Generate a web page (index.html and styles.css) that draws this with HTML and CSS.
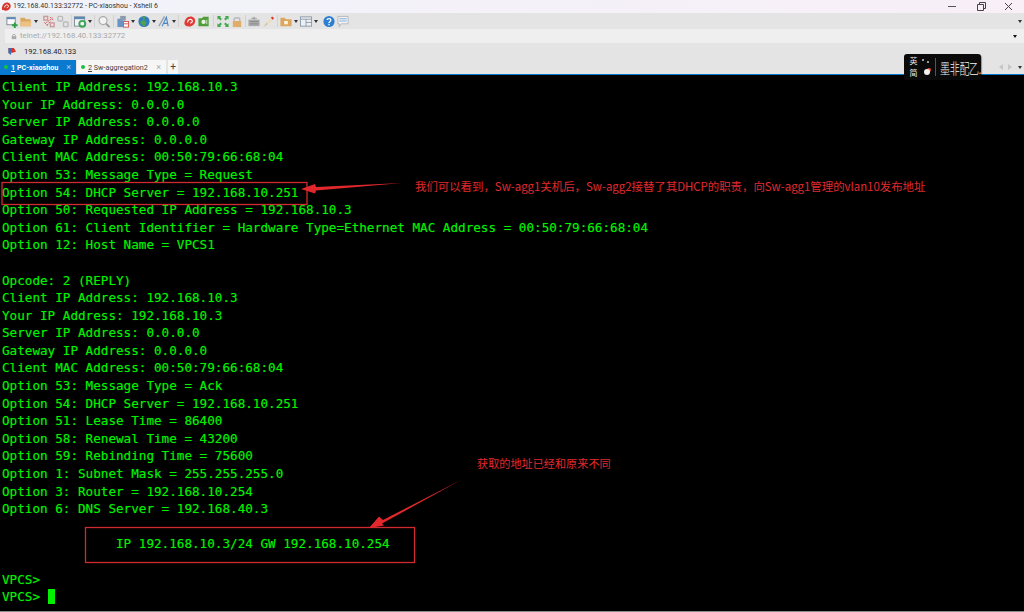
FILE: index.html
```html
<!DOCTYPE html>
<html lang="zh-CN">
<head>
<meta charset="utf-8">
<title>Xshell 6</title>
<link rel="stylesheet" href="styles.css">
</head>
<body>
<div class="app">
  <header class="titlebar">
    <svg class="appicon" viewBox="0 0 12 12"><path d="M1 9C1 5 3 1.500 6.500 1.500C9.500 1.500 11 4 10.500 6.500C10 9 7.500 10.500 5 10.500C3 10.500 1.500 10.500 1 9Z" fill="#d9342b"/><path d="M4 7C3.800 4.800 6 3.500 7.500 4.500C8.800 5.500 8 7.500 6.300 7.300" fill="none" stroke="#fff" stroke-width="1"/></svg>
    <span class="title">192.168.40.133:32772 - PC-xiaoshou - Xshell 6</span>
    <div class="winctl">
      <svg class="wc" viewBox="0 0 28 13"><path d="M9 6.500H17" stroke="#555" fill="none"/></svg>
      <svg class="wc" viewBox="0 0 28 13"><path d="M10.500 4.500H16.500V10.500H10.500ZM12.500 4.500V2.500H18.500V8.500H16.500" stroke="#444" fill="none"/></svg>
      <svg class="wc" viewBox="0 0 28 13"><path d="M10 3L17 10M17 3L10 10" stroke="#444" fill="none"/></svg>
    </div>
  </header>

  <nav class="toolbar">
    <svg class="tool" viewBox="0 0 14 14"><rect x="1.500" y="2.500" width="9" height="8" fill="#fafafa" stroke="#7a8a9a"/><rect x="1.500" y="2.500" width="9" height="2" fill="#5b88b5"/><path d="M10 8V14M7 11H13" stroke="#2ea043" stroke-width="2"/></svg>
    <svg class="tool" viewBox="0 0 14 14"><path d="M1 3H5.500L7 4.500H12V12H1Z" fill="#dca65f"/><path d="M2 7H13L12 12H1Z" fill="#eec184"/></svg>
    <i class="caret"></i>
    <svg class="tool g4" viewBox="0 0 14 14"><g fill="none" stroke="#c99" stroke-width="1.500"><rect x="1.500" y="1.500" width="4" height="4"/><rect x="8.500" y="8.500" width="4" height="4"/></g><path d="M3 9L11 3M5 11L9 6M8 2L12 6M2 8L6 12" stroke="#d9534f" stroke-dasharray="2 1" fill="none"/></svg>
    <svg class="tool" viewBox="0 0 14 14"><g fill="none" stroke="#bbb" stroke-width="1.500"><rect x="1.500" y="1.500" width="5" height="5" rx="1"/><rect x="7.500" y="7.500" width="5" height="5" rx="1"/></g></svg>
    <i class="sep"></i>
    <svg class="tool" viewBox="0 0 14 14"><rect x="1" y="2" width="11" height="10" fill="#f2f2f2" stroke="#7d8b99"/><rect x="1" y="2" width="11" height="2.500" fill="#5b88b5"/><circle cx="9.500" cy="9.500" r="3.200" fill="none" stroke="#3aa655" stroke-width="2"/></svg>
    <i class="caret"></i>
    <i class="sep wide"></i>
    <svg class="tool" viewBox="0 0 14 14"><circle cx="6" cy="6" r="4.300" fill="#f3f3f3" stroke="#aaa" stroke-width="1.300"/><path d="M9.200 9.200L13 13" stroke="#999" stroke-width="2"/></svg>
    <i class="sep wide"></i>
    <svg class="tool" viewBox="0 0 14 14"><rect x="1" y="4" width="6" height="9" fill="#6a94c4"/><rect x="4" y="1" width="6" height="5" fill="#8a9bb0"/><rect x="7.500" y="7" width="5.500" height="6" fill="#fff" stroke="#d9534f"/><path d="M8 9.500H12.500" stroke="#d9534f"/></svg>
    <i class="caret"></i>
    <svg class="tool g2" viewBox="0 0 14 14"><circle cx="7" cy="7" r="6" fill="#2f7cc0"/><path d="M4 2.500C6 3 7 4 6 5.500C5 7 3 6.500 3 8.500C3.500 10.500 6 10 6.500 12L8 12C8 10 10 10 9.500 8C9 6.500 7 7 7.500 5C8 3.500 9 3 8 1.500Z" fill="#4fa14c"/></svg>
    <i class="caret"></i>
    <svg class="tool g1" viewBox="0 0 14 14"><path d="M1.500 12L7.500 1.500" stroke="#9aa5b1" stroke-width="1.500"/><path d="M5 12L9.500 2.500L11.500 12M7 9H11" stroke="#4a86c5" stroke-width="1.200" fill="none"/></svg>
    <i class="caret"></i>
    <i class="sep wide"></i>
    <svg class="tool g2" viewBox="0 0 14 14"><path d="M1 9.500C1 5 3.500 1.500 7.500 1.500C11 1.500 13 4 12.500 7C12 10.500 9 12.500 6 12.500C3 12.500 1.500 11.500 1 9.500Z" fill="#e23b35"/><path d="M4.500 8C4.300 5.500 7 4 8.800 5.200C10.300 6.400 9.300 8.800 7.300 8.500" fill="none" stroke="#fff" stroke-width="1.200"/></svg>
    <svg class="tool" viewBox="0 0 14 14"><path d="M1 3.500H5L6 2H12V12H1Z" fill="#4f9d3a"/><circle cx="6.500" cy="7.500" r="2.300" fill="#e8f4dd"/><path d="M10 5V10" stroke="#d5ecc5"/></svg>
    <i class="sep wide"></i>
    <svg class="tool" viewBox="0 0 14 14"><g fill="#3ea84b"><path d="M1 1H5L3.800 2.200L5.800 4.200L4.200 5.800L2.200 3.800L1 5Z"/><path d="M13 1V5L11.800 3.800L9.800 5.800L8.200 4.200L10.200 2.200L9 1Z"/><path d="M1 13V9L2.200 10.200L4.200 8.200L5.800 9.800L3.800 11.800L5 13Z"/><path d="M13 13H9L10.200 11.800L8.200 9.800L9.800 8.200L11.800 10.200L13 9Z"/></g></svg>
    <svg class="tool" viewBox="0 0 14 14"><path d="M4 7V4.500C4 2.500 10 2.500 10 4.500V7" fill="none" stroke="#b8b8b8" stroke-width="1.500"/><rect x="2.500" y="6.500" width="9" height="6.500" fill="#dfae6b"/></svg>
    <i class="sep"></i>
    <svg class="tool" viewBox="0 0 14 14"><rect x="1" y="5" width="12" height="7" fill="#a9a9a9"/><path d="M7 5V2M2.500 7H11.500M2.500 9.500H11.500" stroke="#8a8a8a"/><path d="M4 3.500H10" stroke="#999"/></svg>
    <svg class="tool g1" viewBox="0 0 14 14"><path d="M2 12L4 8L9 3L11 5L6 10Z" fill="#ecdcc0"/><path d="M9 3L10.500 1.500L12.500 3.500L11 5Z" fill="#d9342b"/><path d="M1 13L4 8L6 10Z" fill="#d8c8a8"/></svg>
    <i class="sep"></i>
    <svg class="tool" viewBox="0 0 14 14"><path d="M1 3H5.500L7 4.500H13V12H1Z" fill="#dca65f"/><rect x="5" y="6.500" width="4" height="3.500" fill="#fff3dd"/></svg>
    <i class="caret"></i>
    <svg class="tool g1" viewBox="0 0 14 14"><rect x="1" y="2" width="12" height="10" fill="#eef1f4" stroke="#8b9aa8"/><path d="M1 4.500H13M7 4.500V12M7 8H13" stroke="#8b9aa8"/></svg>
    <i class="caret"></i>
    <svg class="tool g4" viewBox="0 0 14 14"><circle cx="7" cy="7" r="6" fill="#2f7fd0"/><path d="M5 5.500C5 3.500 9 3.500 9 5.500C9 7 7 7 7 8.500" fill="none" stroke="#fff" stroke-width="1.400"/><rect x="6.300" y="9.500" width="1.400" height="1.500" fill="#fff"/></svg>
    <svg class="tool" viewBox="0 0 14 14"><path d="M1.500 1.500H12.500V9.500H5L3 12.500V9.500H1.500Z" fill="#f3f3f3" stroke="#b5b5b5"/><path d="M3 4H11M3 6.500H11" stroke="#7fb0e6" stroke-width="1.200"/></svg>
    <i class="caret end"></i>
  </nav>

  <div class="address">
    <svg class="lock" viewBox="0 0 8 8"><path d="M2 4V2.500C2 .8 6 .8 6 2.500V4" fill="none" stroke="#999"/><rect x="1" y="3.500" width="6" height="4" fill="#aaa"/></svg>
    <span class="url">telnet://192.168.40.133:32772</span>
    <i class="caret end dark"></i>
  </div>

  <div class="sessions">
    <svg class="flag" viewBox="0 0 10 10"><path d="M.5 1H6.500L9 5L5.500 6.500L.5 6Z" fill="#d9342b"/><path d="M.5 1H3.500V9L.5 7Z" fill="#3b6fb5"/></svg>
    <span class="host">192.168.40.133</span>
  </div>

  <div class="tabs">
    <div class="tab active"><i class="dot"></i><span class="tabname"><u>1</u> PC-xiaoshou</span><span class="x">×</span></div>
    <div class="tab"><i class="dot"></i><span class="tabname"><u>2</u> Sw-aggregation2</span><span class="x">×</span></div>
    <div class="plus">+</div>
    <div class="tabnav">
      <i class="tri left"></i><i class="tri right"></i><i class="caret"></i>
    </div>
  </div>

  <div class="terminal">
    <div class="ln">Client IP Address: 192.168.10.3</div>
    <div class="ln">Your IP Address: 0.0.0.0</div>
    <div class="ln">Server IP Address: 0.0.0.0</div>
    <div class="ln">Gateway IP Address: 0.0.0.0</div>
    <div class="ln">Client MAC Address: 00:50:79:66:68:04</div>
    <div class="ln">Option 53: Message Type = Request</div>
    <div class="ln">Option 54: DHCP Server = 192.168.10.251</div>
    <div class="ln">Option 50: Requested IP Address = 192.168.10.3</div>
    <div class="ln">Option 61: Client Identifier = Hardware Type=Ethernet MAC Address = 00:50:79:66:68:04</div>
    <div class="ln">Option 12: Host Name = VPCS1</div>
    <div class="ln"></div>
    <div class="ln">Opcode: 2 (REPLY)</div>
    <div class="ln">Client IP Address: 192.168.10.3</div>
    <div class="ln">Your IP Address: 192.168.10.3</div>
    <div class="ln">Server IP Address: 0.0.0.0</div>
    <div class="ln">Gateway IP Address: 0.0.0.0</div>
    <div class="ln">Client MAC Address: 00:50:79:66:68:04</div>
    <div class="ln">Option 53: Message Type = Ack</div>
    <div class="ln">Option 54: DHCP Server = 192.168.10.251</div>
    <div class="ln">Option 51: Lease Time = 86400</div>
    <div class="ln">Option 58: Renewal Time = 43200</div>
    <div class="ln">Option 59: Rebinding Time = 75600</div>
    <div class="ln">Option 1: Subnet Mask = 255.255.255.0</div>
    <div class="ln">Option 3: Router = 192.168.10.254</div>
    <div class="ln">Option 6: DNS Server = 192.168.40.3</div>
    <div class="ln"></div>
    <div class="ln">               IP 192.168.10.3/24 GW 192.168.10.254</div>
    <div class="ln"></div>
    <div class="ln">VPCS&gt;</div>
    <div class="ln">VPCS&gt; <span class="cursor"> </span></div>
  </div>
</div>

<div class="imebar">
  <div class="imemodes"><span>英</span><span>简</span></div>
  <div class="imedots"><i class="d1"></i><i class="d2"></i><i class="d3"></i></div>
  <div class="imerule"></div>
  <span class="imebrand">墨非配乙.</span>
</div>

<svg class="notes" viewBox="0 0 1024 612">
  <rect class="box" x="2" y="182.500" width="305" height="22"/>
  <rect class="box" x="85.500" y="527.500" width="329" height="35"/>
  <path class="arrow" d="M402 183L316 187L315 184L301 189L315 193.500L316 190.500Z"/>
  <path class="arrow" d="M461 480L383 520L379 516.500L369 528L384 525.500L382 523.500Z"/>
</svg>
<p class="note one">我们可以看到，Sw-agg1关机后，Sw-agg2接替了其DHCP的职责，向Sw-agg1管理的vlan10发布地址</p>
<p class="note two">获取的地址已经和原来不同</p>
</body>
</html>
```
FILE: styles.css
```css
* { box-sizing: border-box; }
html, body { margin: 0; padding: 0; background: #000; }
body { width: 1024px; height: 612px; overflow: hidden; position: relative; font-family: Roboto, "Noto Sans", sans-serif; }
.app { display: flex; flex-direction: column; height: 612px; }

.titlebar { height: 13px; display: flex; align-items: center; padding-left: 1px; background: linear-gradient(90deg, #f1f3fa, #f8eff7); }
.appicon { width: 11px; height: 11px; }
.title { margin-left: 1px; font-size: 7px; color: #333; white-space: nowrap; line-height: 13px; }
.winctl { margin-left: auto; display: flex; padding-right: 1px; }
.wc { width: 28px; height: 13px; display: block; }

.toolbar { height: 16px; display: flex; align-items: center; padding-left: 5px; background: #e4e4e4; }
.tool { width: 14px; height: 13px; flex: none; display: block; }
.g1 { margin-left: 1px; }
.g2 { margin-left: 2px; }
.g4 { margin-left: 4px; }
.sep { width: 1px; height: 12px; margin: 0 1px; background: #d2d2d2; flex: none; }
.sep.wide { margin: 0 2px; }
.caret { width: 0; height: 0; flex: none; margin: 0 .5px; border-left: 2.500px solid transparent; border-right: 2.500px solid transparent; border-top: 3px solid #333; }
.caret.end { margin-left: auto; margin-right: 2px; }
.caret.dark { margin-right: 7px; border-top-color: #111; }

.address { height: 14px; display: flex; align-items: center; padding-left: 6px; border-left: 5px solid #e4e4e4; background: #efefef; }
.lock { width: 6px; height: 7px; }
.url { margin-left: 3px; font-size: 7.800px; line-height: 14px; color: #a9a9a9; white-space: nowrap; }

.sessions { height: 17px; display: flex; align-items: center; padding-left: 8px; background: #e4e4e4; }
.flag { width: 9px; height: 9px; }
.host { margin-left: 7px; font-size: 7.500px; color: #222; white-space: nowrap; }

.tabs { height: 15px; display: flex; align-items: stretch; background: #e4e4e4; border-bottom: 1px solid #0078d0; }
.tab { width: 89px; display: flex; align-items: center; padding: 0 5px 0 3px; margin-right: 1px; background: #f6f6f6; color: #444; font-size: 7.200px; white-space: nowrap; }
.tab.active { width: 76px; padding-left: 3px; background: #0a7ad1; color: #fff; font-weight: 700; }
.dot { width: 4px; height: 4px; margin: 0 2px 0 1px; border-radius: 50%; background: #16c13b; flex: none; }
.tabname { margin-left: 1px; }
.x { margin-left: auto; color: #aaa; font-weight: 400; font-size: 9px; line-height: 14px; }
.tab.active .x { color: #a9d2f0; }
.plus { width: 10px; margin-left: 1px; background: #f6f6f6; color: #444; font-size: 10px; line-height: 13px; text-align: center; }
.tabnav { margin-left: auto; display: flex; align-items: center; gap: 5px; padding-right: 2px; }
.tri { width: 0; height: 0; border-top: 3px solid transparent; border-bottom: 3px solid transparent; }
.tri.left { border-right: 4px solid #c6c6c6; }
.tri.right { border-left: 4px solid #c6c6c6; }

.terminal { flex: 1; padding: 3px 0 0 2px; background: #000; color: #00f200; border-bottom: 1px solid #8a8a8a; font-family: "DejaVu Sans Mono", monospace; font-size: 12.630px; line-height: 17.590px; overflow: hidden; }
.ln { width: fit-content; min-height: 17.590px; white-space: pre; text-shadow: 0 0 1px rgba(0,255,0,.4); }
.cursor { background: #00f000; }

.imebar { position: absolute; left: 904px; top: 54px; width: 77px; height: 26px; display: flex; align-items: center; background: #0a0a0a; border-radius: 3px; box-shadow: 1px 1px 1px rgba(0,0,0,.35); color: #e8e8e8; }
.imemodes { display: flex; flex-direction: column; width: 14px; margin-left: 3px; font-family: "Noto Sans CJK SC", sans-serif; font-size: 8px; line-height: 12px; text-align: center; }
.imedots { position: relative; width: 12px; height: 26px; }
.imedots i { position: absolute; display: block; border-radius: 50%; }
.d1 { left: 2px; top: 5px; width: 2px; height: 2px; background: #ccc; }
.d2 { left: 7px; top: 7px; width: 2px; height: 2px; background: #ccc; }
.d3 { left: 4px; top: 15px; width: 6px; height: 6px; background: #f2f2f2; box-shadow: 2px -2px 0 -1px #f04a30; }
.imerule { width: 1px; height: 18px; margin-left: 4px; background: #555; }
.imebrand { margin-left: 4px; font-family: "Noto Sans CJK SC", sans-serif; font-size: 10px; font-weight: 300; letter-spacing: -.3px; color: #f4f4f4; white-space: nowrap; transform: scaleY(1.45); }

.notes { position: absolute; left: 0; top: 0; width: 1024px; height: 612px; pointer-events: none; }
.box { fill: none; stroke: #cf2a2f; stroke-width: 1.300; }
.arrow { fill: #e3282d; }
.note { position: absolute; margin: 0; color: #e0292e; font-family: "Noto Sans CJK SC", sans-serif; line-height: 16px; white-space: nowrap; }
.note.one { left: 415px; top: 178px; font-size: 11.420px; }
.note.two { left: 477px; top: 455px; font-size: 11.150px; }
```
